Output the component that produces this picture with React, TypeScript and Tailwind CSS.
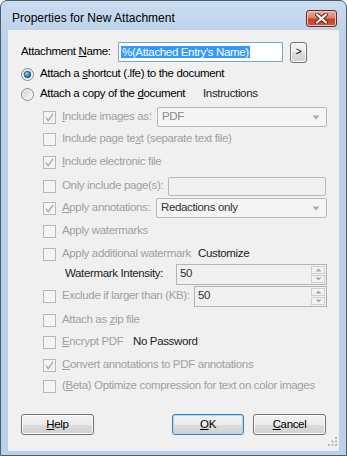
import React from 'react';

const font = "font-['Liberation_Sans',Arial,sans-serif]";

function CheckBox({ checked }: { checked?: boolean }) {
  return (
    <span className="w-[13px] h-[13px] shrink-0 border border-[#b8b8b8] bg-[#f4f4f4] flex items-center justify-center">
      {checked && (
        <svg width="11" height="11" viewBox="0 0 11 11">
          <path d="M2 5.6 L4.2 8.6 L9 1.8" fill="none" stroke="#a6a6a6" strokeWidth="1.3" />
        </svg>
      )}
    </span>
  );
}

function Radio({ checked }: { checked?: boolean }) {
  return (
    <svg width="13" height="13" viewBox="0 0 13 13" className="shrink-0">
      <defs>
        <linearGradient id="rbg" x1="0" y1="0" x2="1" y2="1">
          <stop offset="0" stopColor="#cfcfcf" />
          <stop offset="1" stopColor="#fbfbfb" />
        </linearGradient>
        <radialGradient id="rdot" cx="0.35" cy="0.35" r="0.8">
          <stop offset="0" stopColor="#8fd4f9" />
          <stop offset="0.6" stopColor="#1b7fc0" />
          <stop offset="1" stopColor="#0b4b7c" />
        </radialGradient>
      </defs>
      <circle cx="6.5" cy="6.5" r="6" fill="url(#rbg)" stroke="#8c8c8c" strokeWidth="1" />
      <circle cx="6.5" cy="6.5" r="4.6" fill="none" stroke="#ffffff" strokeWidth="0.8" opacity="0.7" />
      {checked && <circle cx="6.5" cy="6.5" r="3.3" fill="url(#rdot)" stroke="#16466e" strokeWidth="0.7" />}
    </svg>
  );
}

function Combo({ text, className, textClass }: { text: string; className: string; textClass: string }) {
  return (
    <div className={`h-[20px] rounded-[2px] border border-[#b9b9b9] bg-[#f4f4f4] flex items-center pl-[4px] pr-[6px] ${className}`}>
      <span className={`flex-1 ${textClass}`}>{text}</span>
      <svg width="8" height="5" viewBox="0 0 8 5">
        <path d="M0.5 0.5 L7.5 0.5 L4 4.5 Z" fill="#a9a9a9" />
      </svg>
    </div>
  );
}

function Spin({ className }: { className: string }) {
  return (
    <div className={`h-[21px] border border-[#b4b4b4] bg-[#f0f0f0] flex items-stretch p-[1px] ${className}`}>
      <span className="flex-1 pl-[2px] flex items-center text-[#333]">50</span>
      <div className="w-[14px] flex flex-col gap-[1px]">
        <div className="flex-1 border border-[#cfcfcf] bg-[#f2f2f2] flex items-center justify-center">
          <svg width="7" height="4" viewBox="0 0 7 4">
            <path d="M0.5 3.5 L6.5 3.5 L3.5 0.5 Z" fill="#a9a9a9" />
          </svg>
        </div>
        <div className="flex-1 border border-[#cfcfcf] bg-[#f2f2f2] flex items-center justify-center">
          <svg width="7" height="4" viewBox="0 0 7 4">
            <path d="M0.5 0.5 L6.5 0.5 L3.5 3.5 Z" fill="#a9a9a9" />
          </svg>
        </div>
      </div>
    </div>
  );
}

function Btn({ children, def, className }: { children: React.ReactNode; def?: boolean; className: string }) {
  return (
    <div
      className={`h-[21px] rounded-[3px] border flex items-center justify-center text-black bg-[linear-gradient(#f2f2f2,#ebebeb_50%,#dddddd_50%,#cfcfcf)] ${
        def ? 'border-[#3c7fb1] shadow-[inset_0_0_0_1px_#a8dcf7]' : 'border-[#707070] shadow-[inset_0_0_0_1px_#fbfbfb]'
      } ${className}`}
    >
      {children}
    </div>
  );
}

function CheckRow({ checked, mt, children }: { checked?: boolean; mt: string; children: React.ReactNode }) {
  return (
    <div className={`h-[20px] flex items-center pl-[22px] ${mt}`}>
      <CheckBox checked={checked} />
      <span className="ml-[6px] text-[#a0a0a0] whitespace-nowrap">{children}</span>
    </div>
  );
}

export default function App() {
  return (
    <div className={`w-[347px] h-[456px] bg-white text-[11.5px] tracking-[-0.35px] leading-none ${font}`}>
      <div className="h-full rounded-t-[7px] border border-[#505c68] bg-[linear-gradient(#cadcf0,#b9d1ea_40px)] flex flex-col px-[7px] pb-[4px]">
        {/* title bar */}
        <div className="h-[29px] flex items-start">
          <span className="pl-[4px] pt-[11px] text-[12px] tracking-[0px] text-black">Properties for New Attachment</span>
          <div className="ml-auto mr-[2px] mt-[9px] w-[31px] h-[17px] rounded-[3px] border border-[#6e2a22] bg-[linear-gradient(#eab1a5,#d9806c_45%,#c4402a_55%,#cf5a3e)] shadow-[inset_0_0_0_1px_#f2c1b5] flex items-center justify-center">
            <svg width="13" height="11" viewBox="0 0 13 11">
              <path d="M2 1.5 L11 9.5 M11 1.5 L2 9.5" stroke="#5a231c" strokeWidth="4" strokeLinecap="round" />
              <path d="M2 1.5 L11 9.5 M11 1.5 L2 9.5" stroke="#ffffff" strokeWidth="2.2" strokeLinecap="round" />
            </svg>
          </div>
        </div>

        {/* client area */}
        <div className="flex-1 relative bg-[#f0f0f0] flex flex-col pl-[13px] pr-[12px] pt-[12px] text-black">
          <div className="h-[20px] flex items-center">
            <span className="w-[97px] shrink-0">
              Attachment <u>N</u>ame:
            </span>
            <div className="w-[165px] h-[20px] border border-[#7fa4cf] bg-white flex items-center pl-[2px]">
              <span className="bg-[#3399ff] text-white px-[1px] leading-[12px] whitespace-nowrap">%(Attached Entry's Name)</span>
            </div>
            <div className="ml-[7px]">
              <Btn className="w-[17px] h-[17px] text-[10px]">&gt;</Btn>
            </div>
          </div>

          <div className="h-[20px] flex items-center mt-[2px]">
            <Radio checked />
            <span className="ml-[6px] whitespace-nowrap">
              Attach a <u>s</u>hortcut (.lfe) to the document
            </span>
          </div>

          <div className="h-[20px] flex items-center">
            <div className="w-[182px] shrink-0 flex items-center">
              <Radio />
              <span className="ml-[6px] whitespace-nowrap">
                Attach a copy of the <u>d</u>ocument
              </span>
            </div>
            <span className="text-[#222]">Instructions</span>
          </div>

          <div className="h-[20px] flex items-center pl-[22px] mt-[3px]">
            <div className="w-[114px] shrink-0 flex items-center">
              <CheckBox checked />
              <span className="ml-[6px] text-[#a0a0a0] whitespace-nowrap">
                <u>I</u>nclude images as:
              </span>
            </div>
            <Combo text="PDF" className="w-[170px]" textClass="text-[#8a8a8a]" />
          </div>

          <CheckRow mt="mt-[2px]">
            Include page te<u>x</u>t (separate text file)
          </CheckRow>
          <CheckRow checked mt="mt-[3px]">
            <u>I</u>nclude electronic file
          </CheckRow>

          <div className="h-[20px] flex items-center pl-[22px] mt-[4px]">
            <div className="w-[125px] shrink-0 flex items-center">
              <CheckBox />
              <span className="ml-[6px] text-[#a0a0a0] whitespace-nowrap">
                Only include pa<u>g</u>e(s):
              </span>
            </div>
            <div className="w-[158px] h-[19px] rounded-[2px] border border-[#b9b9b9] bg-[#f0f0f0]" />
          </div>

          <div className="h-[20px] flex items-center pl-[22px] mt-[2px]">
            <div className="w-[113px] shrink-0 flex items-center">
              <CheckBox checked />
              <span className="ml-[6px] text-[#a0a0a0] whitespace-nowrap">
                <u>A</u>pply annotations:
              </span>
            </div>
            <Combo text="Redactions only" className="w-[171px]" textClass="text-[#333]" />
          </div>

          <CheckRow mt="mt-[3px]">Apply watermarks</CheckRow>

          <div className="h-[20px] flex items-center pl-[22px] mt-[3px]">
            <div className="w-[155px] shrink-0 flex items-center">
              <CheckBox />
              <span className="ml-[6px] text-[#a0a0a0] whitespace-nowrap">Apply additional watermark</span>
            </div>
            <span className="text-[#222]">Customize</span>
          </div>

          <div className="h-[20px] flex items-center pl-[44px]">
            <span className="w-[111px] shrink-0 text-[#222]">Watermark Intensity:</span>
            <Spin className="w-[151px]" />
          </div>

          <div className="h-[20px] flex items-center pl-[22px] mt-[2px]">
            <div className="w-[151px] shrink-0 flex items-center">
              <CheckBox />
              <span className="ml-[6px] text-[#a0a0a0] whitespace-nowrap">Exclude if larger than (KB):</span>
            </div>
            <Spin className="w-[133px]" />
          </div>

          <CheckRow mt="mt-[4px]">
            Attach as <u>z</u>ip file
          </CheckRow>

          <div className="h-[20px] flex items-center pl-[22px] mt-[2px]">
            <div className="w-[90px] shrink-0 flex items-center">
              <CheckBox />
              <span className="ml-[6px] text-[#a0a0a0] whitespace-nowrap">
                <u>E</u>ncrypt PDF
              </span>
            </div>
            <span className="text-[#222]">No Password</span>
          </div>

          <CheckRow checked mt="mt-[3px]">
            <u>C</u>onvert annotations to PDF annotations
          </CheckRow>
          <CheckRow mt="mt-[1px]">
            (<u>B</u>eta) Optimize compression for text on color images
          </CheckRow>

          <div className="flex items-center mt-[18px]">
            <Btn className="w-[73px]">
              <u>H</u>elp
            </Btn>
            <Btn def className="w-[72px] ml-auto">
              <u>O</u>K
            </Btn>
            <Btn className="w-[73px] ml-[9px] mr-[1px]">
              <u>C</u>ancel
            </Btn>
          </div>

          <svg width="9" height="9" viewBox="0 0 9 9" className="absolute right-[2px] bottom-[5px]">
            <rect x="7" y="0" width="2" height="2" fill="#b8b8b8" />
            <rect x="7" y="3.5" width="2" height="2" fill="#b8b8b8" />
            <rect x="3.5" y="3.5" width="2" height="2" fill="#b8b8b8" />
            <rect x="7" y="7" width="2" height="2" fill="#b8b8b8" />
            <rect x="3.5" y="7" width="2" height="2" fill="#b8b8b8" />
            <rect x="0" y="7" width="2" height="2" fill="#b8b8b8" />
          </svg>
        </div>
      </div>
    </div>
  );
}
